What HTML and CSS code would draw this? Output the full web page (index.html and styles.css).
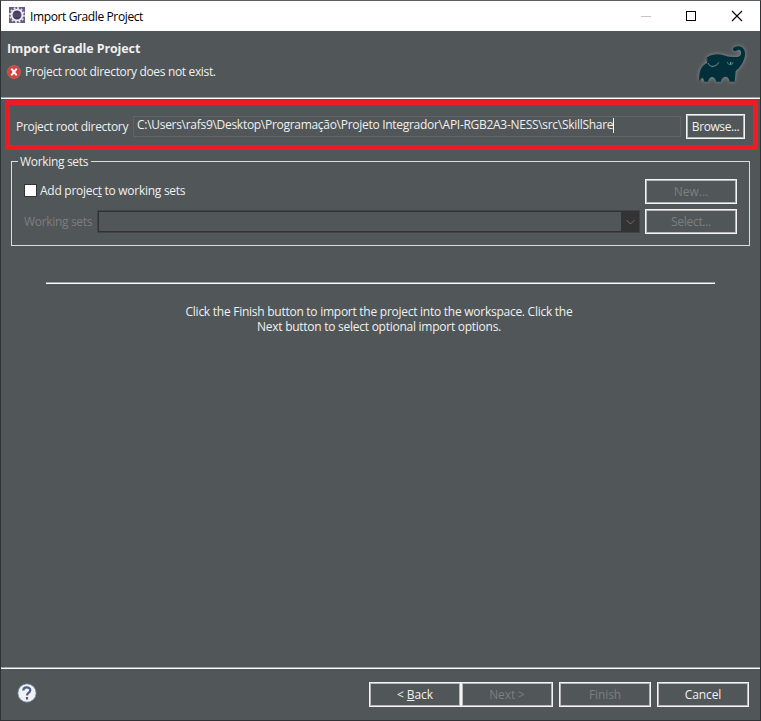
FILE: index.html
```html
<!DOCTYPE html>
<html lang="en">
<head>
<meta charset="utf-8">
<title>Import Gradle Project</title>
<link rel="stylesheet" href="styles.css">
</head>
<body>
<div class="window">
  <header class="titlebar">
    <svg class="app-icon" viewBox="0 0 16 16">
      <rect width="16" height="16" fill="#675a87"/>
      <circle cx="8" cy="8" r="7" fill="none" stroke="#e4e2e8" stroke-width="1.800" stroke-dasharray="1.900 1.765"/>
      <circle cx="8" cy="8" r="5.400" fill="#433a5e" stroke="#efedf2" stroke-width="1.900"/>
      <path d="M4 7h8M4 9h8" stroke="#6f6887" stroke-width=".6"/>
    </svg>
    <span class="caption t-caption">Import Gradle Project</span>
    <svg class="win-btn" viewBox="-2 0 46 29"><path d="M17 14.500h10" stroke="#c4c4c4"/></svg>
    <svg class="win-btn" viewBox="-2 0 46 29"><rect x="16.500" y="9.500" width="9" height="9" fill="none" stroke="#000"/></svg>
    <svg class="win-btn" viewBox="-2 0 46 29"><path d="M16 9l10 10M26 9l-10 10" stroke="#000" stroke-width="1.100"/></svg>
  </header>

  <section class="banner">
    <div>
      <h1 class="t-heading">Import Gradle Project</h1>
      <p class="message">
        <svg class="error-icon" viewBox="0 0 14 14">
          <circle cx="7" cy="7" r="6.500" fill="#d5413f" stroke="#e2645f" stroke-width=".7"/>
          <path d="M4.300 3.700l5.400 6.600M9.700 3.700l-5.400 6.600" stroke="#fff" stroke-width="1.900"/>
        </svg>
        <span class="t-message">Project root directory does not exist.</span>
      </p>
    </div>
    <svg class="logo" viewBox="0 0 213 195">
      <path d="M28 140C25 110 34 90 53 83L53 66C62 60 74 57 86 58C99 59 108 65 119 65C133 66 150 69 153 57C155 47 149 43 143 45C138 49 132 49 129 44C128 38 137 34 146 34C160 35 167 48 165 61C161 86 148 99 137 108L134 140H119C116 120 98 120 92 140H79C74 121 58 121 54 140H43C41 126 34 124 28 140Z" fill="#02303a"/>
      <path d="M53 66C50 72 51 78 54 84" fill="none" stroke="#02303a" stroke-width="3"/>
      <path d="M54 84C57 92 63 95 70 94C78 92 83 88 87 82" fill="none" stroke="#8fa0a5" stroke-width="2.500"/>
      <path d="M111 81Q115 91 124 89Q129 87 129 82" fill="none" stroke="#8fa0a5" stroke-width="2"/>
      <circle cx="122" cy="84" r="2.500" fill="#c5cfd0"/>
    </svg>
  </section>

  <main class="content">
    <div class="root-row">
      <label class="root-label"><span class="t-root">Project root directory</span></label>
      <div class="path-field"><span class="t-path">C:\Users\rafs9\Desktop\Programação\Projeto Integrador\API-RGB2A3-NESS\src\SkillShare</span><i class="caret"></i></div>
      <button class="btn browse"><span class="t-browse">Browse...</span></button>
    </div>

    <fieldset class="group">
      <legend><span class="t-legend">Working sets</span></legend>
      <div class="group-row">
        <label class="check-label"><i class="box"></i><span class="t-check">Add projec<u>t</u> to working sets</span></label>
        <button class="btn off"><span>New...</span></button>
      </div>
      <div class="group-row">
        <span class="sets-label t-legend">Working sets</span>
        <div class="combo"><svg viewBox="0 0 18 21"><path d="M5.500 9l4 4 4-4" fill="none" stroke="#6e6e6e"/></svg></div>
        <button class="btn off"><span class="t-select">Select...</span></button>
      </div>
    </fieldset>

    <div class="rule"></div>
    <p class="hint">Click the Finish button to import the project into the workspace. Click the Next button to select optional import options.</p>
  </main>

  <footer class="footer">
    <svg class="help" viewBox="0 0 20 20">
      <circle cx="10" cy="10" r="9.200" fill="#f1f1f2" stroke="#607aa0" stroke-width=".8"/>
      <path d="M6.300 7.500C6.300 3.300 13.300 3.500 13.300 7.200C13.300 9.600 10 9.500 10 12.500M10 14v2.400" fill="none" stroke="#4a5f85" stroke-width="2.200"/>
    </svg>
    <button class="btn"><span class="t-back">&lt; <u>B</u>ack</span></button>
    <button class="btn off"><span class="t-back">Next &gt;</span></button>
    <button class="btn off gap"><span class="t-back">Finish</span></button>
    <button class="btn gap"><span class="t-back">Cancel</span></button>
  </footer>
</div>
</body>
</html>
```
FILE: styles.css
```css
* { box-sizing: border-box; }
body {
  margin: 0;
  font: 12px/15px "Open Sans", "Noto Sans", sans-serif;
  color: #f0f0f0;
  background: #515658;
}
.window {
  width: 761px;
  height: 721px;
  display: flex;
  flex-direction: column;
  border: 1px solid #303335;
  border-top-color: #5c5c5e;
}
span { white-space: nowrap; }
p, h1 { margin: 0; }
u { text-underline-offset: 1px; text-decoration-thickness: 1px; }

.t-caption { letter-spacing: -.38px; }
.t-heading { letter-spacing: -.1px; }
.t-message { letter-spacing: -.34px; }
.t-root { letter-spacing: -.32px; }
.t-path { letter-spacing: -.29px; }
.t-browse { letter-spacing: -.42px; }
.t-legend { letter-spacing: -.33px; }
.t-check { letter-spacing: -.27px; }
.t-select { letter-spacing: -.3px; }
.t-back { letter-spacing: -.12px; }

.titlebar {
  height: 30px;
  display: flex;
  align-items: center;
  background: #fff;
  color: #000;
  padding-left: 8px;
}
.app-icon { width: 16px; height: 16px; margin: -2px 5px 0 0; }
.caption { margin: 0 auto 0 0; }
.win-btn { width: 46px; height: 29px; }

.banner {
  height: 68px;
  display: flex;
  justify-content: space-between;
  padding-left: 6px;
  border-bottom: 1px solid #fff;
  box-shadow: inset 0 -1px #a0a0a0;
}
h1 { font-size: 12.5px; line-height: 17px; font-weight: 700; padding-top: 9px; }
.message { display: flex; align-items: center; margin-top: 7px; }
.error-icon { width: 14px; height: 14px; margin-right: 4px; }
.logo { width: 71px; height: 65px; margin: 4px -1px 0 0; filter: drop-shadow(0 0 2px #8c9496); }

.content { flex: 1; padding-top: 1px; }
.root-row {
  width: 753px;
  height: 50px;
  margin-left: 4px;
  border: 5px solid #ed1c24;
  display: flex;
  align-items: center;
  padding: 0 8px 0 6px;
}
.root-label { width: 117px; padding-top: 2px; }
.path-field {
  width: 548px;
  height: 21px;
  display: flex;
  border: 1px solid #646464;
  padding: 0 0 0 3px;
  margin-top: 3px;
}
.caret { width: 1px; height: 15px; margin-top: 1px; background: #fff; }

.btn {
  width: 92px;
  height: 25px;
  padding: 0;
  border: 1px solid #f4f4f4;
  box-shadow: inset 0 0 0 1px #b8b8b8;
  background: none;
  color: #f0f0f0;
  font: inherit;
  text-align: center;
}
.off { color: #7d7f80; }
.browse { width: 59px; margin: 3px 0 0 5px; }

.group {
  width: 739px;
  height: 92px;
  margin: 4px 0 0 10px;
  border: 1px solid #dcdcdc;
  padding: 10px 12px 0;
}
legend { height: 15px; margin-left: -6px; padding: 0 3px 0 2px; }
.group-row { display: flex; align-items: center; height: 25px; margin-bottom: 5px; }
.check-label { display: flex; align-items: center; margin-right: auto; }
.box { width: 13px; height: 13px; margin-top: -2px; background: #fff; border: 1px solid #333; margin-right: 3px; }
.t-check { margin-top: -2px; }
.sets-label { width: 73px; color: #7d7f80; }
.combo {
  width: 543px;
  height: 23px;
  margin-right: 5px;
  border: 1px solid #434343;
  box-shadow: inset 0 0 0 1px #333;
  display: flex;
  justify-content: flex-end;
}
.combo svg { width: 18px; height: 21px; background: #333; }

.rule {
  width: 669px;
  height: 2px;
  margin: 36px 0 0 45px;
  background: #fff;
  border-top: 1px solid #a0a0a0;
}
.hint {
  width: 400px;
  margin: 20px 0 0 178px;
  text-align: center;
  letter-spacing: -.26px;
}

.footer {
  height: 53px;
  display: flex;
  align-items: flex-start;
  border-top: 1px solid #a0a0a0;
  box-shadow: inset 0 1px #fff;
  padding: 14px 11px 0 16px;
}
.help { width: 20px; height: 20px; margin: 1px auto 0 0; }
.gap { margin-left: 6px; }
```
